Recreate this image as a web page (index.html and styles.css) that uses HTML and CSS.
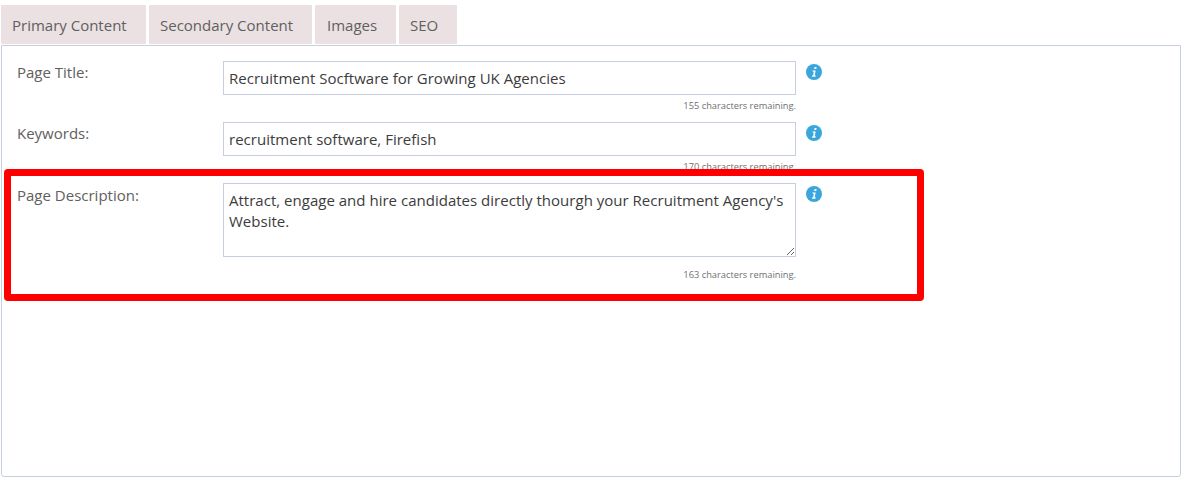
FILE: index.html
```html
<!DOCTYPE html>
<html lang="en">
<head>
<meta charset="utf-8">
<title>SEO</title>
<link rel="stylesheet" href="styles.css">
</head>
<body>
<div class="page">
  <nav class="tabs">
    <a class="tab tab-primary">Primary Content</a>
    <a class="tab tab-secondary">Secondary Content</a>
    <a class="tab tab-images">Images</a>
    <a class="tab tab-seo">SEO</a>
  </nav>
  <section class="panel">
    <div class="row">
      <label class="label">Page Title:</label>
      <div class="field">
        <input class="control" type="text" value="Recruitment Socftware for Growing UK Agencies">
        <div class="hint">155 characters remaining.</div>
      </div>
      <svg class="info" viewBox="0 0 16 16"><circle cx="8" cy="8" r="8" fill="#3aa6dc"/><path d="M8.6 2.9h2l-.4 2h-2zM6.3 6.4h3.4l-1 4.9h1l-.3 1.4H6l.3-1.4h.8l.7-3.5h-.8z" fill="#fff"/></svg>
    </div>
    <div class="row">
      <label class="label">Keywords:</label>
      <div class="field">
        <input class="control" type="text" value="recruitment software, Firefish">
        <div class="hint">170 characters remaining.</div>
      </div>
      <svg class="info" viewBox="0 0 16 16"><circle cx="8" cy="8" r="8" fill="#3aa6dc"/><path d="M8.6 2.9h2l-.4 2h-2zM6.3 6.4h3.4l-1 4.9h1l-.3 1.4H6l.3-1.4h.8l.7-3.5h-.8z" fill="#fff"/></svg>
    </div>
    <div class="row row-area">
      <label class="label">Page Description:</label>
      <div class="field">
        <textarea class="control control-area">Attract, engage and hire candidates directly thourgh your Recruitment Agency's Website.</textarea>
        <div class="hint">163 characters remaining.</div>
      </div>
      <svg class="info" viewBox="0 0 16 16"><circle cx="8" cy="8" r="8" fill="#3aa6dc"/><path d="M8.6 2.9h2l-.4 2h-2zM6.3 6.4h3.4l-1 4.9h1l-.3 1.4H6l.3-1.4h.8l.7-3.5h-.8z" fill="#fff"/></svg>
    </div>
  </section>
  <div class="highlight"></div>
</div>
</body>
</html>
```
FILE: styles.css
```css
* { box-sizing: border-box; }
html, body { margin: 0; padding: 0; background: #fff; }
body { font-family: "Open Sans", "Liberation Sans", sans-serif; font-size: 15px; color: #555; overflow: hidden; }
.page { position: relative; width: 1189px; height: 486px; padding: 5px 8px 0 1px; }
.tabs { display: flex; gap: 3px; height: 39px; margin-bottom: 1px; }
.tab { display: flex; align-items: center; height: 39px; padding: 1px 0 0 11px; background: #ebe1e3; color: #606060; font-size: 15px; }
.tab-primary { width: 145px; }
.tab-secondary { width: 163px; }
.tab-images { width: 81px; padding-left: 12px; }
.tab-seo { width: 58px; }
.panel { width: 1180px; height: 432px; border: 1px solid #c5cfe0; border-radius: 0 0 3px 3px; padding: 15px 0 0 15px; }
.row { display: grid; grid-template-columns: 206px 573px 26px; align-items: start; }
.label { font-size: 15px; line-height: 20px; padding-top: 1px; color: #606060; }
.row-area .label { padding-top: 2px; }
.field { display: flex; flex-direction: column; }
.control { display: block; width: 573px; height: 34px; border: 1px solid #c5cfe0; border-radius: 0; background: #fff; padding: 0 5px; margin: 0; font-family: "Open Sans", "Liberation Sans", sans-serif; font-size: 15px; letter-spacing: 0.015px; color: #3c3c3c; outline: none; }
.control-area { height: 74px; line-height: 21px; padding: 6px 5px; resize: vertical; }
.hint { height: 27px; padding-top: 5px; text-align: right; font-size: 9.3px; line-height: 12px; color: #707070; }
.row-area .hint { padding-top: 12px; }
.info { width: 16px; height: 16px; margin: 3px 0 0 10px; }
.highlight { position: absolute; left: 4px; top: 169px; width: 920px; height: 132px; border: 7px solid #f00; border-radius: 4px; }
```
